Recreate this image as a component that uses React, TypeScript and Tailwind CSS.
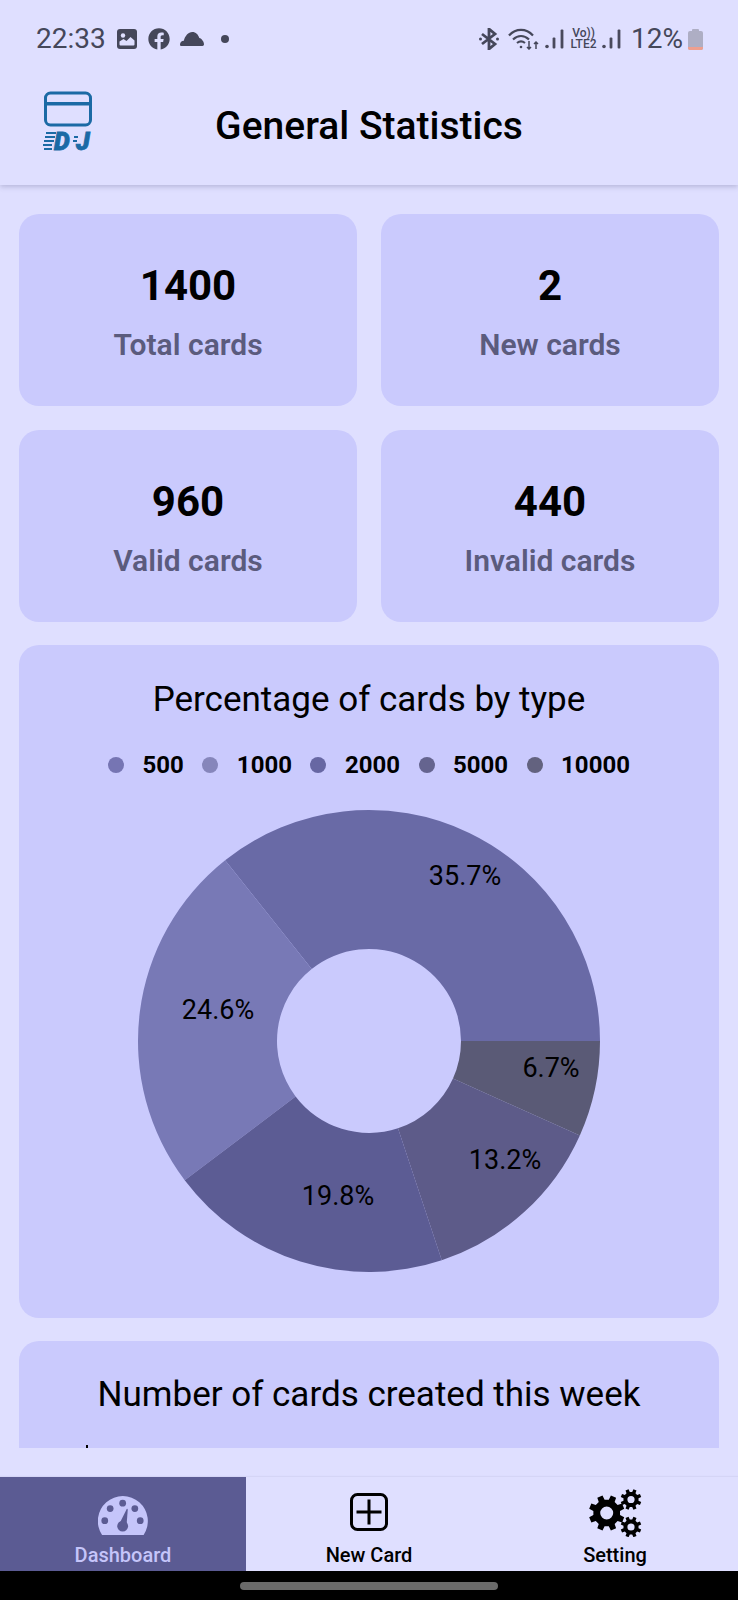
import React from "react";
import { FaFacebook } from "react-icons/fa";

const cx = 250, cy = 250, R = 231, r = 92;
const slices = [
  { v: 35.7, c: "#696aa6", label: "35.7%", dx: 96, dy: -165 },
  { v: 24.6, c: "#7879b6", label: "24.6%", dx: -151, dy: -31 },
  { v: 19.8, c: "#5c5c94", label: "19.8%", dx: -31, dy: 155 },
  { v: 13.2, c: "#5d5b89", label: "13.2%", dx: 136, dy: 119 },
  { v: 6.7, c: "#5a5a76", label: "6.7%", dx: 182, dy: 27 },
];

function Pie() {
  const total = slices.reduce((a, s) => a + s.v, 0);
  let a0 = 0;
  return (
    <svg width="500" height="500" viewBox="0 0 500 500">
      {slices.map((s) => {
        const a1 = a0 + (s.v / total) * Math.PI * 2;
        const p = (rad: number, a: number) => `${cx + rad * Math.cos(a)} ${cy - rad * Math.sin(a)}`;
        const large = a1 - a0 > Math.PI ? 1 : 0;
        const d = `M${p(R, a0)} A${R} ${R} 0 ${large} 0 ${p(R, a1)} L${p(r, a1)} A${r} ${r} 0 ${large} 1 ${p(r, a0)} Z`;
        a0 = a1;
        return <path key={s.label} d={d} fill={s.c} />;
      })}
      {slices.map((s) => (
        <text key={s.label} x={cx + s.dx} y={cy + s.dy} textAnchor="middle" dominantBaseline="central" fontSize="27" fill="#000" fontFamily="Roboto">
          {s.label}
        </text>
      ))}
    </svg>
  );
}

function Stat({ n, l }: { n: string; l: string }) {
  return (
    <div className="flex h-[192px] flex-1 flex-col items-center rounded-[20px] bg-[#cacafd] pt-[48px]">
      <div className="text-[42px] leading-[48px] font-bold text-black">{n}</div>
      <div className="mt-[17px] text-[30px] leading-[36px] font-semibold text-[#5b5b7d]">{l}</div>
    </div>
  );
}

const legend = [
  ["500", "#7675b3"],
  ["1000", "#8686bb"],
  ["2000", "#6767a3"],
  ["5000", "#65648f"],
  ["10000", "#63627f"],
];

function Signal() {
  return (
    <svg width="20" height="20" viewBox="0 0 20 20" fill="#4a4a5c">
      <circle cx="2" cy="17.5" r="1.8" />
      <rect x="7.6" y="8.5" width="2.8" height="11" rx="1" />
      <rect x="15.6" y="0.5" width="2.8" height="19" rx="1" />
    </svg>
  );
}

function gearPath(x: number, y: number, ro: number, ri: number, hole: number, teeth = 8) {
  const step = (Math.PI * 2) / teeth;
  const pts: string[] = [];
  for (let i = 0; i < teeth; i++) {
    const a = i * step + step / 2;
    const w = step * 0.2;
    const g = step * 0.3;
    [[ri, a - g], [ro, a - w], [ro, a + w], [ri, a + g]].forEach(([rad, t]) => {
      pts.push(`${(x + rad * Math.cos(t)).toFixed(2)} ${(y + rad * Math.sin(t)).toFixed(2)}`);
    });
  }
  return `M${pts.join("L")}Z M${x + hole} ${y}A${hole} ${hole} 0 1 0 ${x - hole} ${y}A${hole} ${hole} 0 1 0 ${x + hole} ${y}Z`;
}

function Cogs() {
  return (
    <svg width="53" height="48" viewBox="0 0 53 48" fill="#000">
      <path fillRule="evenodd" d={gearPath(17.7, 24, 18, 13.5, 6.5)} />
      <path fillRule="evenodd" d={gearPath(42, 10.5, 10.5, 7.6, 3.6)} />
      <path fillRule="evenodd" d={gearPath(42, 38, 10.5, 7.6, 3.6)} />
    </svg>
  );
}

function Gauge() {
  return (
    <svg width="50" height="39" viewBox="0 0 148 115" fill="#c5c5fa">
      <path d="M12 115A74 74 0 1 1 135 115Z" />
      <g fill="#5b5b93">
        <circle cx="20" cy="73" r="10" />
        <circle cx="36" cy="37" r="10" />
        <circle cx="73" cy="21" r="10" />
        <circle cx="109" cy="37" r="10" />
        <circle cx="125" cy="73" r="10" />
        <circle cx="73" cy="89" r="16" />
        <path d="M62 85L85 38Q88 37 88 41L84 92Z" />
      </g>
    </svg>
  );
}

export default function App() {
  return (
    <div className="flex h-[1600px] w-[738px] flex-col overflow-hidden bg-[#dfdfff] font-['Roboto',sans-serif]">
      <header className="relative z-10 h-[185px] shrink-0 bg-[#dfdfff] shadow-[0_2px_5px_rgba(70,70,110,0.25)]">
        <div className="flex h-[78px] items-center justify-between pr-[35px] pl-[36px] text-[#45475a]">
          <div className="flex items-center">
            <span className="w-[68px] text-[28px] leading-none font-normal">22:33</span>
            <svg width="20" height="20" viewBox="0 0 20 20" className="ml-[13px]">
              <rect width="20" height="20" rx="3" fill="#45475a" />
              <circle cx="6" cy="6.5" r="2.2" fill="#dfdfff" />
              <path d="M2.5 15.5v-3l4-2.5 3 2 4-4 4 3.5v4a1 1 0 0 1-1 1H3.5a1 1 0 0 1-1-1Z" fill="#dfdfff" />
            </svg>
            <FaFacebook className="ml-[11px] h-[22px] w-[22px]" />
            <svg width="24" height="14" viewBox="0 0 24 14" className="ml-[10px]" fill="#45475a">
              <path d="M1.5 14C0.6 14 0 13.3 0 12.4c0-2.2 1.8-3.6 3.8-3.7C5 4 8.3 0 12.3 0c3.5 0 6 2.6 7 6 2.4.5 4.7 3.8 4.7 6.3 0 1-.7 1.7-1.6 1.7Z" />
            </svg>
            <span className="ml-[17px] h-[8px] w-[8px] rounded-full bg-[#45475a]" />
          </div>
          <div className="flex items-center">
            <svg width="20" height="22" viewBox="0 0 20 22" fill="none" stroke="#45475a" strokeWidth="2.8">
              <path d="M3 6l13 10-6 5V1l6 5L3 16" />
              <circle cx="1.5" cy="11" r="1.5" fill="#45475a" stroke="none" />
              <circle cx="18.5" cy="11" r="1.5" fill="#45475a" stroke="none" />
            </svg>
            <svg width="32" height="22" viewBox="0 0 32 22" fill="none" stroke="#45475a" strokeWidth="2.2" className="ml-[9px]">
              <path d="M1 7.5c7-7.5 17-7.5 24 0" />
              <path d="M5 11.5c5-4.5 11-4.5 16 0" />
              <path d="M9 15c2.5-2 5.5-2 8 0" />
              <circle cx="13" cy="19" r="1.3" fill="#45475a" stroke="none" />
              <path d="M21 13v8M19 19l2 2 2-2M28 21v-7M26 16l2-2 2 2" strokeWidth="1.5" />
            </svg>
            <div className="ml-[5px]"><Signal /></div>
            <div className="ml-[5px] flex w-[27px] flex-col items-center text-[12px] leading-[11px] font-medium">
              <span>Vo))</span>
              <span>LTE2</span>
            </div>
            <div className="ml-[5px]"><Signal /></div>
            <span className="ml-[9px] text-[28px] leading-none font-normal">12%</span>
            <div className="ml-[5px] flex flex-col items-center">
              <div className="h-[2px] w-[7px] rounded-t-[1px] bg-[#aeaec4]" />
              <div className="flex h-[19px] w-[15px] flex-col overflow-hidden rounded-[2px] bg-[#aeaec4]">
                <div className="mt-auto h-[3px] bg-[#ee9f8f]" />
              </div>
            </div>
          </div>
        </div>
        <div className="relative flex h-[107px] items-center justify-center pb-[12px]">
          <svg width="50" height="72" viewBox="0 0 50 72" className="absolute top-[12px] left-[43px]" fill="none">
            <rect x="2.5" y="3" width="45" height="32" rx="5" stroke="#1b6aa5" strokeWidth="3" />
            <rect x="2.5" y="12" width="45" height="3.5" fill="#1b6aa5" />
            <g stroke="#1b6aa5" strokeWidth="2">
              <path d="M3 43h10M2 47h10M1 51h10M0 55h9M1 59h8" />
              <path d="M31 47h4M30 51h4" />
            </g>
            <text x="11" y="60" fontFamily="Roboto" fontStyle="italic" fontWeight="900" fontSize="25" fill="#1b6aa5" stroke="#1b6aa5" strokeWidth="0.8">D</text>
            <text x="33" y="60" fontFamily="Roboto" fontStyle="italic" fontWeight="900" fontSize="25" fill="#1b6aa5" stroke="#1b6aa5" strokeWidth="0.8">J</text>
          </svg>
          <h1 className="text-[39px] leading-[44px] font-medium text-black">General Statistics</h1>
        </div>
      </header>

      <main className="h-[1263px] shrink-0 overflow-hidden px-[19px] pt-[29px]">
        <div className="flex gap-[24px]">
          <Stat n="1400" l="Total cards" />
          <Stat n="2" l="New cards" />
        </div>
        <div className="mt-[24px] flex gap-[24px]">
          <Stat n="960" l="Valid cards" />
          <Stat n="440" l="Invalid cards" />
        </div>
        <section className="mt-[23px] flex h-[673px] flex-col items-center rounded-[20px] bg-[#cacafd]">
          <h2 className="mt-[35px] text-[35px] leading-[40px] text-black">Percentage of cards by type</h2>
          <div className="mt-[31px] flex items-center gap-[18.5px]">
            {legend.map(([t, c]) => (
              <div key={t} className="flex items-center gap-[18.5px]">
                <span className="h-[16px] w-[16px] rounded-full" style={{ background: c }} />
                <span className="text-[24px] leading-[28px] font-bold text-black">{t}</span>
              </div>
            ))}
          </div>
          <div className="mt-[12px]">
            <Pie />
          </div>
        </section>
        <section className="mt-[23px] h-[200px] rounded-[20px] bg-[#cacafd] pt-[34px] text-center">
          <h2 className="text-[35px] leading-[40px] text-black">Number of cards created this week</h2>
          <div className="mt-[30px] ml-[67px] h-[8px] w-[2px] bg-black" />
        </section>
      </main>

      <div className="h-[29px] shrink-0" />

      <nav className="flex h-[94px] shrink-0 bg-[#dfdfff] shadow-[0_-1px_1px_rgba(70,70,110,0.06)]">
        <div className="flex w-[246px] flex-col items-center bg-[#5b5b93] pt-[19px] text-[#c5c5fa]">
          <Gauge />
          <span className="mt-[7px] text-[20px] leading-[26px] font-medium">Dashboard</span>
        </div>
        <div className="flex w-[246px] flex-col items-center pt-[16px] text-black">
          <svg width="38" height="38" viewBox="0 0 38 38" fill="none" stroke="#000" strokeWidth="3">
            <rect x="1.5" y="1.5" width="35" height="35" rx="6" />
            <path d="M6.5 19h25M19 6.5v25" />
          </svg>
          <span className="mt-[11px] text-[20px] leading-[26px] font-medium">New Card</span>
        </div>
        <div className="flex w-[246px] flex-col items-center pt-[12px] text-black">
          <Cogs />
          <span className="mt-[5px] text-[20px] leading-[26px] font-medium">Setting</span>
        </div>
      </nav>
      <div className="flex flex-1 items-center justify-center bg-black">
        <div className="mt-[1px] h-[8px] w-[258px] rounded-full bg-[#6a6a6a]" />
      </div>
    </div>
  );
}
